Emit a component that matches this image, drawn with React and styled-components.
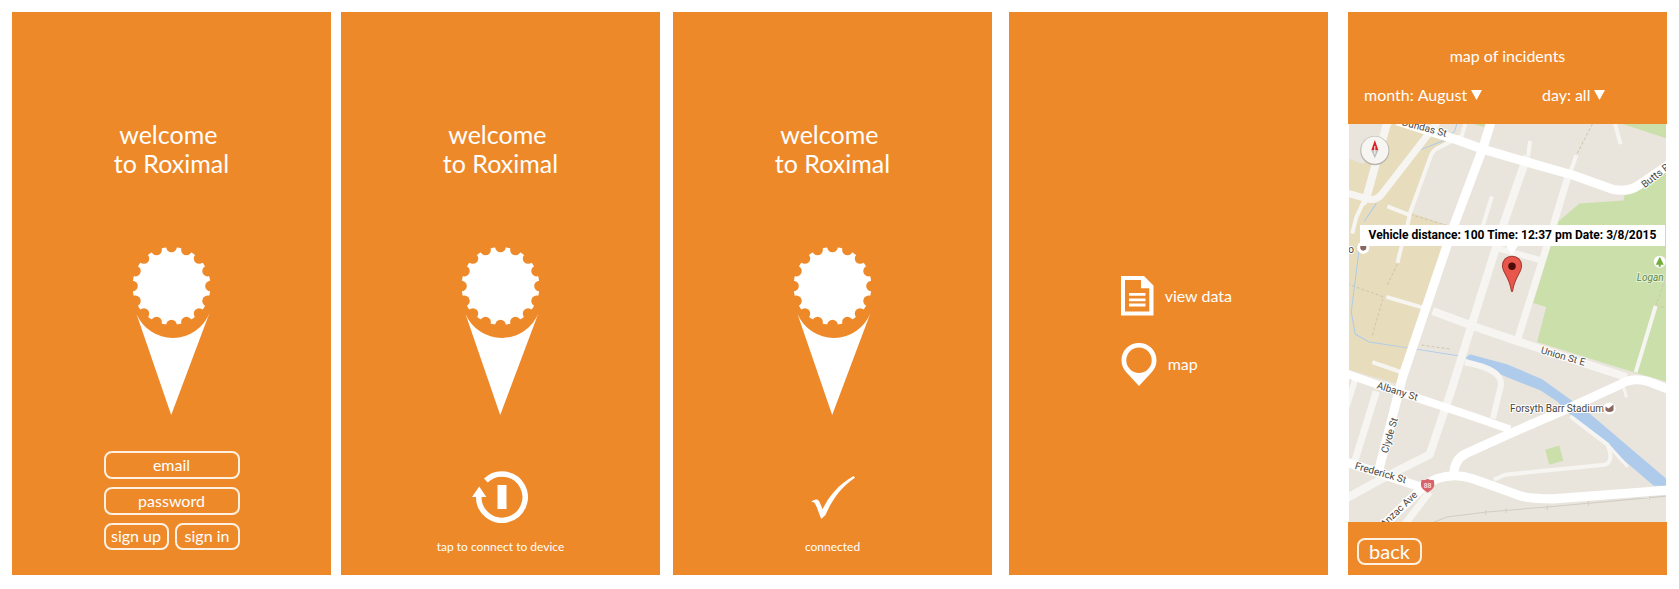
import React from "react";
import styled, { createGlobalStyle } from "styled-components";

const ORANGE = "#ee8929";
const LINE = "#fff1e2";

const GlobalStyle = createGlobalStyle`
  * { box-sizing: border-box; }
  body {
    margin: 0;
    background: #ffffff;
    font-family: Lato, "Liberation Sans", sans-serif;
    font-size: 16px;
  }
  h1, h2, p { margin: 0; font-weight: 400; }
  svg { display: block; flex: none; }
`;

const Board = styled.main`
  display: flex;
  align-items: stretch;
  min-height: 100vh;
  padding: 12px 12px 14px;
`;

const Screen = styled.section`
  flex: 1 1 0;
  min-width: 0;
  margin-left: ${(p) => p.$gap || 0}px;
  display: flex;
  flex-direction: column;
  align-items: ${(p) => p.$align || "center"};
  background: ${ORANGE};
  color: #ffffff;
`;

const Welcome = styled.h1`
  padding-top: 108px;
  font-size: 25px;
  line-height: 29px;
  text-align: center;
`;

const ConeSlot = styled.div`
  padding: 69px 0 36px;
`;

const LoginForm = styled.form`
  display: grid;
  grid-template-columns: 1fr 1fr;
  gap: 8px 6px;
  width: 136px;
`;

const Field = styled.input`
  grid-column: 1 / -1;
  width: 100%;
  height: 28px;
  padding: 0 8px 2px;
  border: 2px solid ${LINE};
  border-radius: 8px;
  background: transparent;
  color: #ffffff;
  font: inherit;
  text-align: center;
  &::placeholder { color: #ffffff; opacity: 1; }
`;

const OutlineButton = styled.button`
  width: ${(p) => p.$width || "100%"};
  height: 27px;
  padding: 0 0 2px;
  border: 2px solid ${LINE};
  border-radius: 8px;
  background: transparent;
  color: #ffffff;
  font-family: inherit;
  font-size: ${(p) => p.$size || 16}px;
  line-height: 20px;
  white-space: nowrap;
  cursor: pointer;
`;

const Status = styled.div`
  display: flex;
  flex-direction: column;
  align-items: center;
  gap: 16px;
  padding: 20px 0 0;
  border: 0;
  background: transparent;
  color: #ffffff;
  font-family: inherit;
  font-size: 12px;
  line-height: 16px;
`;

const StatusIcon = styled.span`
  display: flex;
  align-items: center;
  height: 52px;
`;

const Menu = styled.nav`
  flex: 1;
  align-self: stretch;
  display: flex;
  flex-direction: column;
  justify-content: center;
  gap: 27px;
  padding: 74px 0 0 35%;
  margin-bottom: ${(p) => p.$lift || 0}px;
`;

const MenuLink = styled.a`
  display: flex;
  align-items: center;
  gap: 11px;
  color: #ffffff;
  line-height: 20px;
  text-decoration: none;
`;

const MapHeader = styled.header`
  padding: 34px 16px 19px;
`;

const MapTitle = styled.h2`
  font-size: 16px;
  line-height: 20px;
  text-align: center;
`;

const Filters = styled.div`
  display: grid;
  grid-template-columns: 62% 38%;
  padding-top: 19px;
`;

const Filter = styled.label`
  display: flex;
  align-items: center;
  gap: 4px;
  line-height: 20px;
`;

const Picker = styled.select`
  appearance: none;
  field-sizing: content;
  padding: 0;
  border: 0;
  background: transparent;
  color: #ffffff;
  font: inherit;
  line-height: 20px;
`;

const MapArea = styled.div`
  position: relative;
  flex: 1 0 396px;
  min-height: 0;
  border: solid #ffffff;
  border-width: 0 1px;
  overflow: hidden;
`;

const MapDrawing = styled.svg`
  position: absolute;
  inset: 0;
  width: 100%;
  height: 100%;
`;

const Bubble = styled.p`
  position: absolute;
  top: 101px;
  right: 1px;
  left: 11px;
  color: #000000;
  background: #ffffff;
  font-family: Roboto, sans-serif;
  font-size: 12px;
  font-weight: 700;
  line-height: 21px;
  text-align: center;
  white-space: nowrap;
`;

const MapFooter = styled.footer`
  padding: 16px 9px 10px;
`;

const TEETH = Array.from({ length: 16 }, (_, i) => (i * Math.PI) / 8);

function Cone() {
  return (
    <svg width="79" height="168" viewBox="0 0 79 168" aria-hidden="true">
      <circle cx="39.5" cy="39" r="39" fill="#fff" />
      {TEETH.map((a) => (
        <circle key={a} cx={39.5 + 39 * Math.sin(a)} cy={39 - 39 * Math.cos(a)} r="5.3" fill={ORANGE} />
      ))}
      <path d="M4.5 67A39.5 39.5 0 0 0 77.5 66L39.2 168Z" fill="#fff" />
    </svg>
  );
}

function ReconnectIcon() {
  return (
    <svg width="56" height="52" viewBox="-30 -26 56 52" aria-hidden="true">
      <path d="M-16.1 -16.6A23.2 23.2 0 1 1 -23.2 -1" fill="none" stroke="#fff" strokeWidth="5.5" />
      <path d="M-30 0L-22.8 -10.5L-15.6 0Z" fill="#fff" />
      <rect x="-4.5" y="-12" width="9" height="24" fill="#fff" />
    </svg>
  );
}

function TickIcon() {
  return (
    <svg width="44" height="43" viewBox="0 0 44 43" aria-hidden="true">
      <path d="M0 26.2C2 24 5 22.8 7 24C8.800 25.500 10.300 30 11.500 33.300C18 20 28 8 42.600 0L44 1.800C30 11 21 24 14.500 39L10.200 43C8.200 38 5.500 29.500 3.600 27C2.500 25.800 1.300 26 0 26.200Z" fill="#fff" />
    </svg>
  );
}

function DocumentIcon() {
  return (
    <svg width="33" height="40" viewBox="0 0 33 40" aria-hidden="true">
      <path fillRule="evenodd" fill="#fff" d="M0 0H23L32.500 9.500V39.500H0ZM4 4V35.500H28.300V12.300H20V4Z" />
      <path d="M8 18.400H24.500M8 23.800H24.500M8 29H24.500" stroke="#fff" strokeWidth="2.800" />
    </svg>
  );
}

function PinIcon() {
  return (
    <svg width="36" height="43" viewBox="0 0 36 43" aria-hidden="true">
      <path fillRule="evenodd" fill="#fff" d="M18 0C28 0 35.500 7.500 35.500 17.300C35.500 22.500 33.500 26.500 30 30L18 43L6 30C2.500 26.500 .500 22.500 .500 17.300C.500 7.500 8 0 18 0ZM18 4.500A12.700 12.700 0 1 0 18 29.900A12.700 12.700 0 1 0 18 4.500Z" />
    </svg>
  );
}

function DropArrow() {
  return (
    <svg width="11" height="10" viewBox="0 0 11 10" aria-hidden="true">
      <path d="M0 0H11L5.500 10Z" fill="#fff" />
    </svg>
  );
}

const MINOR_ROADS = [
  [8, "M40 -2L20 70Q18 76 15 78"],
  [4, "M17 76L9 93L5 109"],
  [7, "M90 -2L35 69Q30 76 22 75L1 69"],
  [4, "M118 -2L114 12L90 24Q84 27 82 35L63 87L59 105L54 122L50 138"],
  [4, "M40 82L63 91"],
  [4, "M182 17L180 32"],
  [8, "M179 32L155 101L125 196L104 264L82 329L42 349L-2 373"],
  [4, "M228 31L222 48"],
  [7, "M221 48L205 101L170 213"],
  [4, "M144 72L135 101L130 116"],
  [6, "M151 124L194 136"],
  [4, "M39 172L76 183"],
  [8, "M85 186L125 201L169 216L278 252"],
  [4, "M266 -2L272 20"],
  [4, "M307 181L287 247"],
  [4, "M25 237L54 247"],
  [6, "M117 237Q155 244 153 260L145 293"],
  [7, "M29 266L7 337"],
  [6, "M8 254L-2 286"],
  [4, "M222 291L259 319Q266 336 256 339L157 349L146 354"],
  [3, "M260 320L279 341"],
  [3, "M275 262L278 272"],
  [7, "M82 366L56 400"],
];

const MAIN_ROADS = [
  [9, "M50 -3L107 15L135 25L179 38L225 51L264 65Q280 68 290 61L322 39"],
  [9, "M144 -5L135 24L105 104L55 252L31 346"],
  [8, "M-2 248L29 259L65 271L125 291L162 304"],
  [9, "M322 265L299 256Q283 252 272 259L222 282L162 308L118 328Q106 334 106 350"],
  [9, "M-2 336L72 361L89 353Q107 347 125 353L172 370Q182 373 205 373L322 364"],
  [9, "M76 361L33 402"],
];

const LABELS = [
  ["Dundas St", 54, 1, 15],
  ["Butts Rd", 296, 64, -38],
  ["Albany St", 29, 263, 17],
  ["Clyde St", 40, 328, -73],
  ["Frederick St", 7, 343, 16],
  ["Anzac Ave", 37, 402, -44],
  ["Union St E", 192, 228, 16],
];

function StreetMap() {
  return (
    <MapDrawing viewBox="1 0 317 396" preserveAspectRatio="xMidYMid slice" role="img" aria-label="Street map">
      <rect x="-400" y="-400" width="1200" height="1200" fill="#e9e5dd" />
      <path d="M45 0L110 10L84 31L63 88L103 102L52 259L0 244V34L16 40Z" fill="#e7dcbc" />
      <path d="M210 97L231 79L275 76L276 71L285 69L320 46V257L285 247L189 217L198 182L185 178ZM274 0L320 15V0ZM122 -1H138L136 3ZM197 324L211 320L215 335L201 339ZM310 253H320V257Z" fill="#cadfaa" />
      <path d="M118 233L122 229L159 239L194 254L222 274L240 287L320 355V360H305L222 289L209 276L192 265L164 254L145 246Z" fill="#aecbeb" />
      <path d="M12 124L4 187L8 209L22 217L62 223L120 232M17 97L29 79M72 26L95 17L107 7L109 0" fill="none" stroke="#aecbeb" />
      <path d="M244 0L229 29M63 90L103 102M0 159L36 172L25 210M40 160L50 139M74 220L103 224M307 181L320 183M307 181L318 150" fill="none" stroke="#cfc7ae" strokeDasharray="3 2" />
      <path d="M82 398L99 391L139 386L199 381L320 370M138 384V389M158 382V387M199 379V384M240 375V380M301 369V374" fill="none" stroke="#d0cdc5" />
      <g fill="none" stroke="#f6f5f1" strokeLinejoin="round">
        {MINOR_ROADS.map(([w, d]) => <path key={d} d={d} strokeWidth={w} />)}
      </g>
      <g fill="none" stroke="#ffffff" strokeLinejoin="round">
        {MAIN_ROADS.map(([w, d]) => <path key={d} d={d} strokeWidth={w} />)}
      </g>
      <g fontFamily="Roboto, sans-serif" fontSize="10" fill="#4a4640" stroke="#ffffff" strokeWidth="2" paintOrder="stroke">
        {LABELS.map(([name, x, y, turn]) => (
          <text key={name} transform={`translate(${x} ${y}) rotate(${turn})`}>{name}</text>
        ))}
        <text x="162" y="287">Forsyth Barr Stadium</text>
        <text x="1" y="128">o</text>
        <text x="288" y="156" fill="#5c8a4c" stroke="#e4f0d4" fontStyle="italic">Logan Park</text>
      </g>
      <circle cx="16" cy="123" r="6" fill="#fff" />
      <path d="M13 121H19V123Q19 126 16 126Q13 126 13 123Z" fill="#8a6660" />
      <circle cx="261" cy="283" r="6" fill="#fff" />
      <path d="M257 281L260 283L265 279V285Q261 288 257 285Z" fill="#8a6660" />
      <circle cx="311" cy="137" r="6" fill="#fff" />
      <path d="M311 132L315 140H312V142H310V140H307Z" fill="#74ad3c" />
      <path d="M74 354Q77 355 80 353Q83 355 86 354Q88 361 84 364L80 367L76 364Q72 361 74 354Z" fill="#da626b" />
      <text x="80" y="362" fontFamily="Roboto, sans-serif" fontSize="7" fill="#fff" textAnchor="middle">88</text>
      <circle cx="27.500" cy="26.500" r="14.500" fill="#b9b5ac" />
      <circle cx="27.500" cy="26" r="13.500" fill="#f6f5f2" />
      <path d="M27.500 16L31 26H24Z" fill="#dc1f26" />
      <path d="M24 26H31L27.500 34Z" fill="#bdbdbd" />
      <path d="M27.500 22V30" stroke="#fff" />
      <path d="M158 121H170L164 130Z" fill="#fff" />
      <path d="M164 131.500C169.500 131.500 173.500 135.500 173.500 141C173.500 148 166.500 152 164.500 166.500H163.500C161.500 152 154.500 148 154.500 141C154.500 135.500 158.500 131.500 164 131.500Z" fill="#e9574c" stroke="#a63a32" />
      <circle cx="164" cy="141.500" r="3.700" fill="#4c0d0a" />
    </MapDrawing>
  );
}

function WelcomeHeading() {
  return (
    <>
      <Welcome>welcome&nbsp;<br />to Roximal</Welcome>
      <ConeSlot><Cone /></ConeSlot>
    </>
  );
}

export default function App() {
  return (
    <>
      <GlobalStyle />
      <Board>
        <Screen>
          <WelcomeHeading />
          <LoginForm onSubmit={(e) => e.preventDefault()}>
            <Field type="email" placeholder="email" aria-label="email" />
            <Field type="password" placeholder="password" aria-label="password" />
            <OutlineButton type="button">sign up</OutlineButton>
            <OutlineButton type="submit">sign in</OutlineButton>
          </LoginForm>
        </Screen>

        <Screen $gap={10}>
          <WelcomeHeading />
          <Status as="button" type="button">
            <StatusIcon><ReconnectIcon /></StatusIcon>
            tap to connect to device
          </Status>
        </Screen>

        <Screen $gap={13}>
          <WelcomeHeading />
          <Status role="status">
            <StatusIcon><TickIcon /></StatusIcon>
            connected
          </Status>
        </Screen>

        <Screen $gap={17}>
          <Menu>
            <MenuLink href="#data"><DocumentIcon />view data</MenuLink>
            <MenuLink href="#map"><PinIcon />map</MenuLink>
          </Menu>
        </Screen>

        <Screen $gap={20} $align="stretch">
          <MapHeader>
            <MapTitle>map of incidents</MapTitle>
            <Filters>
              <Filter>
                month:
                <Picker defaultValue="August">
                  <option>July</option>
                  <option>August</option>
                </Picker>
                <DropArrow />
              </Filter>
              <Filter>
                day:
                <Picker defaultValue="all">
                  <option>all</option>
                  <option>1</option>
                </Picker>
                <DropArrow />
              </Filter>
            </Filters>
          </MapHeader>
          <MapArea>
            <StreetMap />
            <Bubble>Vehicle distance: 100 Time: 12:37 pm Date: 3/8/2015</Bubble>
          </MapArea>
          <MapFooter>
            <OutlineButton type="button" $width="65px" $size={20}>back</OutlineButton>
          </MapFooter>
        </Screen>
      </Board>
    </>
  );
}
